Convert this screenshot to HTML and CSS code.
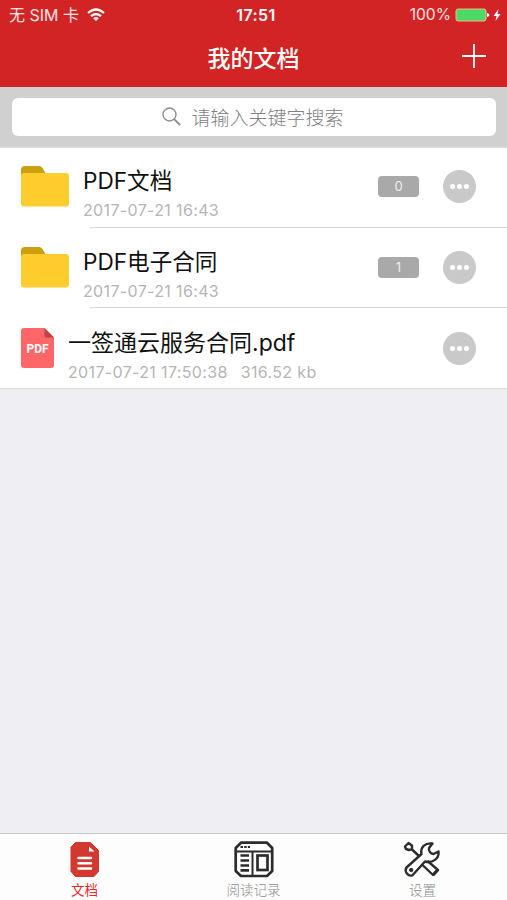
FILE: index.html
```html
<!DOCTYPE html>
<html lang="zh-CN">
<head>
    <meta charset="UTF-8">
    <meta name="viewport" content="width=device-width, initial-scale=1.0">
    <title>我的文档</title>
    <link rel="stylesheet" href="styles.css">
</head>
<body>
    <header class="header">
        <div class="status-bar">
            <div class="carrier">
                <span class="carrier-name">无 SIM 卡</span>
                <svg class="wifi" width="18" height="14" viewBox="0 0 18 14" fill="none" stroke="#fff" stroke-width="2.2">
                    <path d="M1 5 Q9 -2 17 5"/>
                    <path d="M4 8.2 Q9 3.8 14 8.2"/>
                    <path d="M6.2 10.2 Q9 7.8 11.8 10.2 L9 13 Z" fill="#fff" stroke="none"/>
                </svg>
            </div>
            <span class="time">17:51</span>
            <div class="power">
                <span class="percent">100%</span>
                <svg width="46" height="14" viewBox="0 0 46 14">
                    <rect x="1" y="1" width="30" height="12" rx="2" fill="#4cd964" stroke="#f3b58f"/>
                    <path d="M32 5 Q34.5 5.5 34.5 7 Q34.5 8.5 32 9 Z" fill="#fff"/>
                    <path d="M43.5 1 L38.5 8 H41.5 L40.5 13 L45.5 6 H42.5 Z" fill="#fff"/>
                </svg>
            </div>
        </div>
        <div class="nav-bar">
            <h1>我的文档</h1>
            <button class="add" aria-label="添加">
                <svg width="24" height="24" viewBox="0 0 24 24" stroke="#fff" stroke-width="1.8">
                    <path d="M12 0 V24 M0 12 H24"/>
                </svg>
            </button>
        </div>
    </header>

    <div class="search-bar">
        <div class="search-field">
            <svg width="19" height="19" viewBox="0 0 19 19" fill="none" stroke="#8e8e93">
                <circle cx="7.5" cy="7.5" r="6.5" stroke-width="1.4"/>
                <path d="M12.2 12.2 L18 18" stroke-width="1.9"/>
            </svg>
            <span>请输入关键字搜索</span>
        </div>
    </div>

    <ul class="file-list">
        <li class="row">
            <svg class="folder" width="48" height="41" viewBox="0 0 48 41">
                <path d="M0 12 V4 Q0 0 4 0 H18 Q20 0 21.5 2 L24.5 7 V12 Z" fill="#cc9f0e"/>
                <rect y="7" width="48" height="33.5" rx="3" fill="#ffcc2d"/>
            </svg>
            <div class="info">
                <div class="name">PDF文档</div>
                <div class="meta">2017-07-21 16:43</div>
            </div>
            <span class="count">0</span>
            <button class="more" aria-label="更多"><i></i><i></i><i></i></button>
        </li>
        <li class="row">
            <svg class="folder" width="48" height="41" viewBox="0 0 48 41">
                <path d="M0 12 V4 Q0 0 4 0 H18 Q20 0 21.5 2 L24.5 7 V12 Z" fill="#cc9f0e"/>
                <rect y="7" width="48" height="33.5" rx="3" fill="#ffcc2d"/>
            </svg>
            <div class="info">
                <div class="name">PDF电子合同</div>
                <div class="meta">2017-07-21 16:43</div>
            </div>
            <span class="count">1</span>
            <button class="more" aria-label="更多"><i></i><i></i><i></i></button>
        </li>
        <li class="row file">
            <svg class="pdf" width="33" height="40" viewBox="0 0 33 40">
                <path d="M3 0 H23.5 L33 9.5 V37 Q33 40 30 40 H3 Q0 40 0 37 V3 Q0 0 3 0 Z" fill="#ff6668"/>
                <path d="M23.5 0 L33 9.5 H25.5 Q23.5 9.5 23.5 7.5 Z" fill="#b84446"/>
                <text class="pdf-label" x="16.5" y="25" text-anchor="middle">PDF</text>
            </svg>
            <div class="info">
                <div class="name">一签通云服务合同.pdf</div>
                <div class="meta"><span>2017-07-21 17:50:38</span><span>316.52 kb</span></div>
            </div>
            <button class="more" aria-label="更多"><i></i><i></i><i></i></button>
        </li>
    </ul>

    <nav class="tab-bar">
        <div class="tab active">
            <svg width="40" height="38" viewBox="0 0 40 38">
                <path d="M10.5 1.5 H25.5 L33.5 9.5 V30.5 L29 35.5 H10.5 L6 30.5 V6 Z" fill="#d3382f" stroke="#d3382f" stroke-linejoin="round"/>
                <path d="M24 5.5 V10.5 H29.5 Z" fill="#fff"/>
                <path d="M13.5 17 H26 M13.5 22.3 H26 M13.5 27.5 H26" stroke="#fff" stroke-width="2.5" stroke-linecap="round"/>
            </svg>
            <span>文档</span>
        </div>
        <div class="tab">
            <svg width="40" height="38" viewBox="0 0 40 38" fill="none" stroke="#2c2c2c" stroke-width="2.7">
                <path d="M7 1.7 H33 L38.2 7 V30 L33 35 H7 L1.7 30 V7 Z" stroke-linejoin="round"/>
                <path d="M2 10.5 H38 M18.5 10.5 V34" stroke-width="2"/>
                <path d="M6.5 6 H16" stroke-dasharray="2.5 1.2" stroke-width="2"/>
                <path d="M6.5 14.5 H15 M6.5 19.5 H15 M6.5 24.5 H15 M6.5 29.3 H15"/>
                <rect x="23.5" y="14.5" width="10" height="14.5"/>
            </svg>
            <span>阅读记录</span>
        </div>
        <div class="tab">
            <svg width="40" height="38" viewBox="0 0 40 38" fill="none" stroke="#2c2c2c" stroke-width="2.4" stroke-linejoin="round">
                <path d="M29.5 2.5 C22 1.5 17 6.5 18.5 13 L3.5 26.5 C1 30.5 5 35.8 9.5 34.3 L22 20.5 C29.5 22.5 36.5 17.5 35.5 10.5 L30.5 13 C27.5 12.5 25.5 10 26 7 Z"/>
                <circle cx="8.2" cy="29" r="1.7" fill="#2c2c2c" stroke-width="1"/>
                <path d="M2 5.5 L5.5 2 L9 4.5 L9 8 L6 9 L3 8 Z M9 8.5 L16.5 15.5"/>
                <path d="M19.5 24 L30 34 L35 29 L24.5 20"/>
                <path d="M30 34 L35 28.5" stroke-width="3.2"/>
            </svg>
            <span>设置</span>
        </div>
    </nav>
</body>
</html>
```
FILE: styles.css
```css
* {
    box-sizing: border-box;
}

body {
    display: flex;
    flex-direction: column;
    height: 100vh;
    margin: 0;
    background-color: #eeeef3;
    font-family: Inter, "Noto Sans CJK SC", sans-serif;
    color: #111;
}

svg {
    display: block;
    flex-shrink: 0;
}

button {
    padding: 0;
    border: none;
    background: none;
}

.header {
    height: 87px;
    background-color: #d22424;
    color: #fff;
}

.status-bar {
    display: grid;
    grid-template-columns: 1fr auto 1fr;
    align-items: center;
    height: 30px;
    padding: 0 6px 0 9px;
    font-size: 16px;
    line-height: 30px;
}

.carrier, .power {
    display: flex;
    align-items: center;
}

.carrier {
    gap: 8px;
    color: #ffe5e5;
}

.power {
    justify-content: flex-end;
    gap: 4px;
    color: #ffe5e5;
}

.percent {
    font-size: 15.6px;
}

.time {
    padding-left: 2px;
    font-weight: 600;
    letter-spacing: 0.4px;
}

.nav-bar {
    display: grid;
    grid-template-columns: 1fr auto 1fr;
    align-items: center;
    height: 54px;
    padding: 0 21px;
}

h1 {
    grid-column: 2;
    margin: 0;
    padding-top: 3px;
    font-size: 23px;
    font-weight: 500;
    line-height: 30px;
}

.add {
    justify-self: end;
    margin-top: -2px;
}

.search-bar {
    height: 61px;
    padding: 11px 11px 12px 12px;
    background-color: #d0d0d0;
    border-bottom: 1px solid #dcdcdc;
}

.search-field {
    display: flex;
    justify-content: center;
    align-items: center;
    gap: 10px;
    height: 38px;
    padding: 0 2px 2px 0;
    border-radius: 6px;
    background-color: #fff;
    color: #808085;
    font-size: 19px;
    font-weight: 300;
}

.file-list {
    margin: 0;
    padding: 0;
    list-style: none;
    background-color: #fff;
    border-bottom: 1px solid #dcdce0;
}

.row {
    display: flex;
    align-items: center;
    height: 80px;
    padding: 0 31px 4px 21px;
    background: linear-gradient(#d9d9dc, #d9d9dc) 90px 100% / 100% 1px no-repeat;
}

.row + .row {
    padding-bottom: 2px;
}

.row.file {
    padding-bottom: 0;
    background: none;
}

.info {
    flex: 1;
    margin-left: 14px;
    padding-top: 15px;
}

.file .info {
    padding-top: 16px;
}

.name {
    font-size: 22.6px;
    line-height: 32px;
    white-space: nowrap;
}

.file .name {
    font-size: 23px;
}

.meta {
    display: flex;
    gap: 13px;
    color: #b5b5b5;
    font-size: 16px;
    line-height: 26px;
    letter-spacing: 0.35px;
}

.count {
    width: 41px;
    height: 21px;
    margin-right: 24px;
    border-radius: 4px;
    background-color: #a9a9a9;
    color: #eee;
    font-size: 13px;
    line-height: 21px;
    text-align: center;
}

.more {
    display: flex;
    justify-content: center;
    align-items: center;
    gap: 2px;
    width: 33px;
    height: 33px;
    border-radius: 50%;
    background-color: #c9c9c9;
}

.more i {
    width: 5px;
    height: 5px;
    border-radius: 50%;
    background-color: #fff;
}

.pdf-label {
    fill: #fff;
    font-family: Roboto, sans-serif;
    font-size: 12px;
    font-weight: 700;
}

.tab-bar {
    display: flex;
    height: 67px;
    margin-top: auto;
    border-top: 1px solid #cbcbce;
    background-color: #fdfdfd;
}

.tab {
    display: flex;
    flex: 1;
    flex-direction: column;
    align-items: center;
    padding-top: 7px;
    color: #8c8c8c;
    font-size: 13.5px;
    font-weight: 300;
    line-height: 23px;
}

.tab.active {
    color: #e8282a;
    font-weight: 400;
}
```
